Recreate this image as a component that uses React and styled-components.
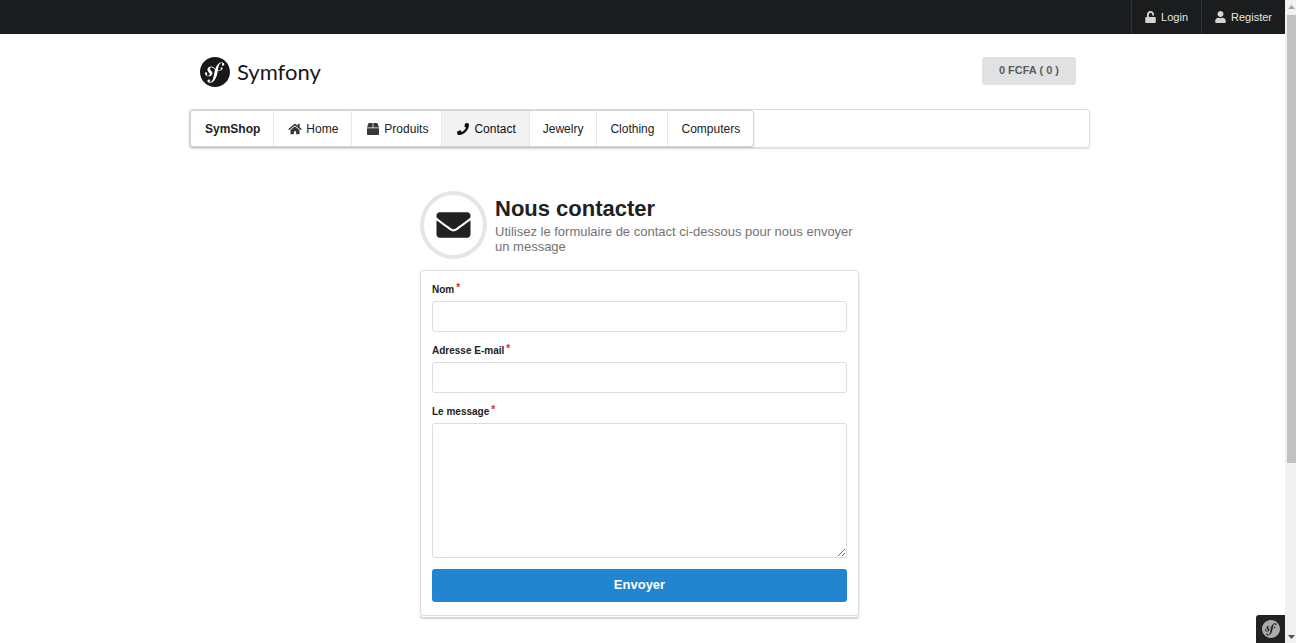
import React from "react";
import styled, { createGlobalStyle } from "styled-components";
import { FaUnlock, FaUser, FaHome, FaBox, FaPhone, FaEnvelope, FaSymfony } from "react-icons/fa";

const ink = "#1b1c1d";
const line = "#dcddde";

const GlobalStyle = createGlobalStyle`
  *, *::before, *::after { box-sizing: border-box; }
  html { height: 100%; overflow: hidden; }
  body {
    margin: 0;
    padding-right: 11px;
    background: #fff;
    color: #212121;
    font-family: "Liberation Sans", Arial, sans-serif;
    font-size: 12px;
  }
  a { color: inherit; text-decoration: none; }
  button, input, textarea { font-family: inherit; }
`;

const TopBar = styled.nav`
  display: flex;
  justify-content: flex-end;
  height: 34px;
  background: ${ink};
`;

const TopLink = styled.a`
  display: flex;
  align-items: center;
  gap: 5px;
  padding: 0 13px;
  border-left: 1px solid #2f3031;
  color: #e6e6e6;
  font-size: 11px;

  svg { width: 11px; height: 12px; color: #d5d5d5; }
`;

const Page = styled.div`
  padding-right: 6px;
`;

const Container = styled.div`
  max-width: 901px;
  margin: 0 auto;
`;

const Header = styled.header`
  display: flex;
  justify-content: space-between;
  align-items: flex-start;
  padding: 23px 14px 22px 11px;
`;

const Logo = styled.a`
  display: flex;
  align-items: center;
  gap: 7px;
  height: 30px;
  padding-bottom: 1px;
  color: #1a171b;
  font-family: Lato, "Open Sans", sans-serif;
  font-size: 22px;
  line-height: 28px;

  svg { width: 30px; height: 30px; }
`;

const CartButton = styled.button`
  height: 28px;
  padding: 0 17px 2px;
  border: 0;
  border-radius: 3px;
  background: #e0e1e2;
  color: #5c5d5e;
  font-size: 11px;
  font-weight: 700;
`;

const Menu = styled.nav`
  display: flex;
  height: 39px;
  padding: 1px;
  border: 1px solid ${line};
  border-radius: 3px;
  box-shadow: 0 1px 2px rgba(34, 36, 38, 0.15);
`;

const MenuItems = styled.div`
  display: flex;
  border-radius: 3px;
  overflow: hidden;
  box-shadow: 0 0 0 1px #d4d4d5, 0 1px 2px 1px rgba(34, 36, 38, 0.15);
`;

const MenuLink = styled.a`
  display: flex;
  align-items: center;
  gap: 4px;
  padding: 0 13px;
  padding-left: ${(p) => (p.$category ? "13px" : "14px")};
  border-right: 1px solid #e8e8e8;
  background: ${(p) => (p.$active ? "#f2f2f2" : "#fff")};
  color: ${(p) => (p.$active ? "#0d0d0d" : "#212121")};
  font-weight: ${(p) => (p.$brand ? 700 : 400)};

  &:last-child { border-right: 0; }
  svg { width: 14px; height: 12px; color: ${(p) => (p.$active ? "#0d0d0d" : "#373737")}; }
`;

const Contact = styled.main`
  max-width: 439px;
  margin: 43px auto 24px;
`;

const Intro = styled.div`
  display: flex;
  align-items: center;
  gap: 8px;
  margin-bottom: 11px;
`;

const Badge = styled.div`
  display: flex;
  align-items: center;
  justify-content: center;
  flex: none;
  width: 67px;
  height: 68px;
  border: 4px solid #e5e5e5;
  border-radius: 50%;

  svg { width: 35px; height: 34px; }
`;

const Title = styled.h1`
  margin: 0 0 2px;
  font-size: 22px;
  line-height: 26px;
`;

const Subtitle = styled.p`
  margin: 0;
  color: #737373;
  font-size: 13px;
  line-height: 15px;
`;

const Form = styled.form`
  display: flex;
  flex-direction: column;
  gap: 11px;
  padding: 11px 11px 13px;
  border: 1px solid ${line};
  border-radius: 3px;
  box-shadow: 0 1px 0 #fff, 0 2px 0 #d4d4d5, 0 3px 2px rgba(34, 36, 38, 0.2);
`;

const Field = styled.div`
  display: flex;
  flex-direction: column;
  gap: 3px;
`;

const Label = styled.label`
  font-size: 10px;
  font-weight: 700;
  line-height: 16px;

  &::after {
    content: "*";
    margin-left: 2px;
    color: #db2828;
    vertical-align: top;
    line-height: 12px;
  }
`;

const TextInput = styled.input`
  width: 100%;
  height: ${(p) => (p.as === "textarea" ? "135px" : "31px")};
  padding: 8px 11px;
  border: 1px solid ${line};
  border-radius: 3px;
  background: #fff;
  font-size: 11px;
  resize: vertical;
`;

const SubmitButton = styled.button`
  height: 33px;
  padding: 0 16px 2px;
  border: 0;
  border-radius: 3px;
  background: #2185d0;
  color: #fff;
  font-size: 13px;
  font-weight: 700;
`;

const Profiler = styled.button`
  position: fixed;
  right: 11px;
  bottom: 0;
  display: flex;
  align-items: center;
  justify-content: center;
  width: 29px;
  height: 28px;
  padding: 0;
  border: 0;
  border-radius: 3px 0 0 0;
  background: #222;
  color: #aaa;

  svg { width: 18px; height: 18px; }
`;

const ScrollRail = styled.div`
  position: fixed;
  top: 0;
  right: 0;
  bottom: 0;
  display: flex;
  flex-direction: column;
  align-items: center;
  justify-content: space-between;
  width: 11px;
  padding: 5px 0 4px 2px;
  background: #f1f1f1;
`;

const ScrollArrow = styled.svg`
  display: block;
  flex: none;
  width: 7px;
  height: 4px;
  fill: ${(p) => (p.$dim ? "#a3a3a3" : "#505050")};
`;

const ScrollTrack = styled.div`
  flex: 1;
  width: 100%;
  margin: 6px 0;
`;

const ScrollThumb = styled.div`
  width: 9px;
  height: 73%;
  background: #c1c1c1;
`;

const menu = [
  { label: "SymShop", brand: true },
  { label: "Home", icon: FaHome },
  { label: "Produits", icon: FaBox },
  { label: "Contact", icon: FaPhone, active: true },
  { label: "Jewelry", category: true },
  { label: "Clothing", category: true },
  { label: "Computers", category: true },
];

const fields = [
  { id: "name", label: "Nom", type: "text" },
  { id: "email", label: "Adresse E-mail", type: "email" },
  { id: "message", label: "Le message", as: "textarea" },
];

export default function App() {
  return (
    <>
      <GlobalStyle />
      <TopBar>
        <TopLink href="#login"><FaUnlock />Login</TopLink>
        <TopLink href="#register"><FaUser />Register</TopLink>
      </TopBar>
      <Page>
        <Container>
          <Header>
            <Logo href="#home"><FaSymfony viewBox="8 8 496 496" />Symfony</Logo>
            <CartButton type="button">0 FCFA ( 0 )</CartButton>
          </Header>
          <Menu>
            <MenuItems>
              {menu.map(({ label, icon: Icon, active, brand, category }) => (
                <MenuLink
                  key={label}
                  href={`#${label.toLowerCase()}`}
                  $active={active}
                  $brand={brand}
                  $category={category}
                >
                  {Icon && <Icon />}
                  {label}
                </MenuLink>
              ))}
            </MenuItems>
          </Menu>
          <Contact>
            <Intro>
              <Badge><FaEnvelope /></Badge>
              <div>
                <Title>Nous contacter</Title>
                <Subtitle>Utilisez le formulaire de contact ci-dessous pour nous envoyer un message</Subtitle>
              </div>
            </Intro>
            <Form>
              {fields.map(({ id, label, ...control }) => (
                <Field key={id}>
                  <Label htmlFor={id}>{label}</Label>
                  <TextInput id={id} required {...control} />
                </Field>
              ))}
              <SubmitButton type="submit">Envoyer</SubmitButton>
            </Form>
          </Contact>
        </Container>
      </Page>
      <Profiler type="button" aria-label="Symfony toolbar"><FaSymfony viewBox="8 8 496 496" /></Profiler>
      <ScrollRail>
        <ScrollArrow viewBox="0 0 7 4" $dim><path d="M0 4 3.500 0 7 4z" /></ScrollArrow>
        <ScrollTrack><ScrollThumb /></ScrollTrack>
        <ScrollArrow viewBox="0 0 7 4"><path d="M0 0 3.500 4 7 0z" /></ScrollArrow>
      </ScrollRail>
    </>
  );
}
